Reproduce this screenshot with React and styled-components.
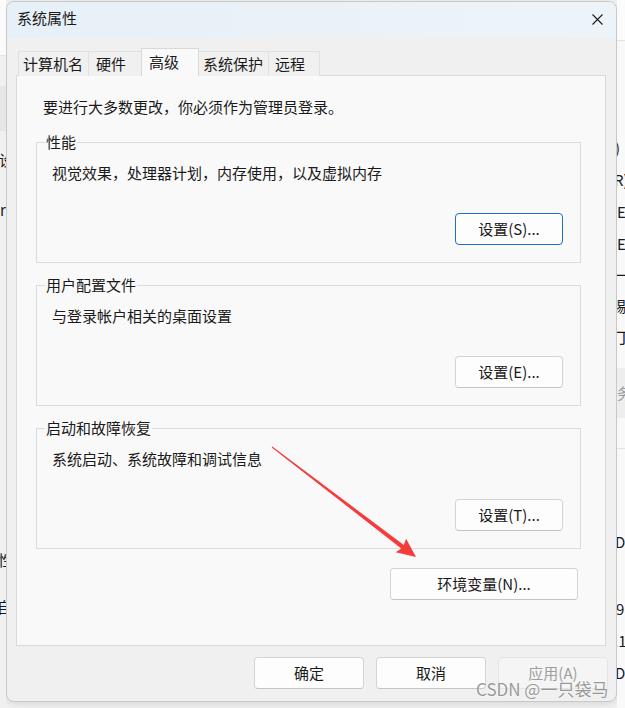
import React from 'react';
import styled, { createGlobalStyle } from 'styled-components';

const GlobalStyle = createGlobalStyle`
  html, body { margin: 0; padding: 0; }
  body {
    width: 625px;
    height: 708px;
    overflow: hidden;
    background: #f3f3f3;
    font-family: "Noto Sans CJK SC", "Noto Sans", sans-serif;
    color: #1a1a1a;
  }
`;

const Desktop = styled.div`
  position: relative;
  width: 625px;
  height: 708px;
  display: grid;
  grid-template-columns: 6px 611px 8px;
  overflow: hidden;
  background: #f3f3f3;
`;

const Strip = styled.div`
  position: relative;
  overflow: hidden;
  display: flex;
  flex-direction: column;
  background: ${p => (p.$side === 'left' ? '#f0f0f0' : '#f9f9f9')};
`;

const StripHead = styled.div`
  height: ${p => p.$h}px;
  flex: none;
  background: #fbfbfb;
  border-bottom: 1px solid #e3e3e3;
`;

const StripBlock = styled.div`
  height: ${p => p.$h}px;
  margin-top: ${p => p.$mt || 0}px;
  flex: none;
  background: ${p => p.$bg || 'transparent'};
  font-size: 15px;
  line-height: ${p => p.$h}px;
  white-space: nowrap;
  color: ${p => (p.$fade ? '#9a9a9a' : '#1a1a1a')};
  margin-left: ${p => p.$ml || 0}px;
`;

const Dialog = styled.div`
  grid-column: 2;
  margin-top: 1px;
  height: 701px;
  box-sizing: border-box;
  border: 1px solid #c8c8c8;
  border-radius: 8px;
  background: #f0f0f0;
  display: flex;
  flex-direction: column;
  overflow: hidden;
  box-shadow: 0 2px 10px rgba(0, 0, 0, 0.12);
`;

const TitleBar = styled.div`
  height: 36px;
  flex: none;
  display: flex;
  align-items: center;
  justify-content: space-between;
  padding: 0 13px 0 10px;
  background: linear-gradient(90deg, #e7f0f7 0%, #edf4f9 100%);
`;

const Title = styled.span`
  font-size: 15px;
  line-height: 20px;
  padding-bottom: 4px;
`;

const CloseIcon = () => (
  <svg width="11" height="11" viewBox="0 0 11 11" style={{ marginTop: -2 }}>
    <path d="M0.5 0.5 L10.5 10.5 M10.5 0.5 L0.5 10.5" stroke="#1c1c1c" strokeWidth="1.1" fill="none" />
  </svg>
);

const Body = styled.div`
  flex: 1;
  display: flex;
  flex-direction: column;
  padding: 10px 8px 0 9px;
`;

const TabRow = styled.div`
  display: flex;
  align-items: flex-end;
  padding-left: 3px;
  margin-bottom: -1px;
  position: relative;
  z-index: 1;
`;

const Tab = styled.div`
  box-sizing: border-box;
  width: ${p => p.$w}px;
  height: ${p => (p.$active ? 28 : 25)}px;
  margin-left: -1px;
  border: 1px solid ${p => (p.$active ? '#d9d9d9' : '#e0e0e0')};
  border-bottom: none;
  background: ${p => (p.$active ? '#f9f9f9' : '#f0f0f0')};
  display: flex;
  align-items: ${p => (p.$active ? 'flex-start' : 'center')};
  justify-content: flex-start;
  padding-left: ${p => p.$pl}px;
  padding-top: ${p => (p.$active ? 3 : 0)}px;
  font-size: 15px;
  line-height: 20px;
  position: relative;
  z-index: ${p => (p.$active ? 2 : 1)};
`;

const Panel = styled.div`
  box-sizing: border-box;
  width: 590px;
  height: 571px;
  flex: none;
  border: 1px solid #dadada;
  background: #f9f9f9;
  padding: 21px 24px 0 19px;
  display: flex;
  flex-direction: column;
`;

const Note = styled.div`
  margin-left: 7px;
  font-size: 15px;
  line-height: 20px;
`;

const Groups = styled.div`
  margin-top: 25px;
  display: flex;
  flex-direction: column;
  gap: 22px;
`;

const Group = styled.div`
  position: relative;
  box-sizing: border-box;
  height: 121px;
  border: 1px solid #dcdcdc;
  padding: 20px 17px 17px 15px;
  display: flex;
  flex-direction: column;
  justify-content: space-between;
`;

const Legend = styled.span`
  position: absolute;
  top: -11px;
  left: 8px;
  padding: 0 1px;
  background: #f9f9f9;
  font-size: 15px;
  line-height: 20px;
`;

const Desc = styled.div`
  font-size: 15px;
  line-height: 20px;
`;

const Button = styled.button`
  box-sizing: border-box;
  width: ${p => p.$w}px;
  height: 32px;
  flex: none;
  padding: 0;
  margin: 0;
  border-radius: 4px;
  border: 1px solid ${p => (p.$focus ? '#1f6fc4' : p.$disabled ? '#e4e4e4' : '#d4d4d4')};
  border-bottom-color: ${p => (p.$focus ? '#1f6fc4' : p.$disabled ? '#e4e4e4' : '#c4c4c4')};
  background: ${p => (p.$disabled ? '#f5f5f5' : '#fdfdfd')};
  color: ${p => (p.$disabled ? '#9e9e9e' : '#1a1a1a')};
  font-family: "Noto Sans CJK SC", "Noto Sans", sans-serif;
  font-size: 15px;
  line-height: 20px;
  display: flex;
  align-items: center;
  justify-content: center;
  align-self: ${p => p.$self || 'auto'};
  margin-right: ${p => p.$mr || 0}px;
`;

const EnvRow = styled.div`
  margin-top: 19px;
  display: flex;
  justify-content: flex-end;
`;

const Footer = styled.div`
  margin-top: 11px;
  display: flex;
  justify-content: flex-end;
  gap: 12px;
`;

const Overlay = styled.svg`
  position: absolute;
  left: 0;
  top: 0;
  pointer-events: none;
`;

const Watermark = styled.div`
  position: absolute;
  left: 476px;
  top: 677px;
  font-family: "Noto Sans CJK SC", "Noto Sans", sans-serif;
  font-size: 17px;
  line-height: 24px;
  color: rgba(125, 125, 125, 0.78);
  text-shadow: 0 0 2px rgba(255, 255, 255, 0.9);
  white-space: nowrap;
`;

const tabs = [
  { label: '计算机名', w: 71, pl: 4 },
  { label: '硬件', w: 54, pl: 7 },
  { label: '高级', w: 58, pl: 7, active: true },
  { label: '系统保护', w: 71, pl: 4 },
  { label: '远程', w: 52, pl: 6 },
];

const groups = [
  { title: '性能', desc: '视觉效果，处理器计划，内存使用，以及虚拟内存', btn: '设置(S)...', focus: true },
  { title: '用户配置文件', desc: '与登录帐户相关的桌面设置', btn: '设置(E)...' },
  { title: '启动和故障恢复', desc: '系统启动、系统故障和调试信息', btn: '设置(T)...' },
];

// arrow geometry
const tip = [416, 557];
const start = [272, 447];
const dx = tip[0] - start[0];
const dy = tip[1] - start[1];
const len = Math.hypot(dx, dy);
const ux = dx / len;
const uy = dy / len;
const px = -uy;
const py = ux;
const headLen = 19;
const headHalf = 8.5;
const bc = [tip[0] - ux * headLen, tip[1] - uy * headLen];
const shaftHalf = 2.2;
const pts = [
  [start[0] + px * 0.5, start[1] + py * 0.5],
  [bc[0] + px * shaftHalf + ux * 2, bc[1] + py * shaftHalf + uy * 2],
  [bc[0] + px * headHalf, bc[1] + py * headHalf],
  tip,
  [bc[0] - px * headHalf, bc[1] - py * headHalf],
  [bc[0] - px * shaftHalf + ux * 2, bc[1] - py * shaftHalf + uy * 2],
  [start[0] - px * 0.5, start[1] - py * 0.5],
]
  .map(p => p.map(v => v.toFixed(1)).join(','))
  .join(' ');

export default function App() {
  return (
    <>
      <GlobalStyle />
      <Desktop>
        <Strip $side="left">
          <StripHead $h={55} />
          <StripBlock $h={45} $mt={30} $bg="#e6e6e6" />
          <StripBlock $h={22} $mt={18} $ml={-1}>设</StripBlock>
          <StripBlock $h={22} $mt={28} $ml={0}>r</StripBlock>
          <StripBlock $h={22} $mt={328} $ml={-2}>性</StripBlock>
          <StripBlock $h={22} $mt={25} $ml={-3}>自</StripBlock>
        </Strip>

        <Dialog>
          <TitleBar>
            <Title>系统属性</Title>
            <CloseIcon />
          </TitleBar>
          <Body>
            <TabRow>
              {tabs.map(t => (
                <Tab key={t.label} $w={t.w} $pl={t.pl} $active={t.active}>
                  {t.label}
                </Tab>
              ))}
            </TabRow>
            <Panel>
              <Note>要进行大多数更改，你必须作为管理员登录。</Note>
              <Groups>
                {groups.map(g => (
                  <Group key={g.title}>
                    <Legend>{g.title}</Legend>
                    <Desc>{g.desc}</Desc>
                    <Button $w={108} $self="flex-end" $focus={g.focus}>
                      {g.btn}
                    </Button>
                  </Group>
                ))}
              </Groups>
              <EnvRow>
                <Button $w={188} $mr={3}>环境变量(N)...</Button>
              </EnvRow>
            </Panel>
            <Footer>
              <Button $w={110}>确定</Button>
              <Button $w={110}>取消</Button>
              <Button $w={110} $disabled>应用(A)</Button>
            </Footer>
          </Body>
        </Dialog>

        <Strip $side="right">
          <StripHead $h={40} />
          <StripBlock $h={22} $mt={96} $ml={-2}>)</StripBlock>
          <StripBlock $h={22} $mt={10} $ml={-3}>R)</StripBlock>
          <StripBlock $h={22} $mt={10} $ml={0}>E</StripBlock>
          <StripBlock $h={22} $mt={10} $ml={0}>E</StripBlock>
          <StripBlock $h={22} $mt={9} $ml={-2}>一</StripBlock>
          <StripBlock $h={22} $mt={9} $ml={-6}>赐</StripBlock>
          <StripBlock $h={22} $mt={9} $ml={-1}>丁</StripBlock>
          <StripBlock $h={50} $mt={20} $bg="#eeeeee" $fade $ml={0}>务</StripBlock>
          <StripBlock $h={1} $mt={30} $bg="#e3e3e3" />
          <StripBlock $h={22} $mt={82} $ml={-2}>D'</StripBlock>
          <StripBlock $h={22} $mt={45} $ml={-1}>9</StripBlock>
          <StripBlock $h={22} $mt={10} $ml={-3}>.1</StripBlock>
          <StripBlock $h={22} $mt={10} $ml={-2}>D'</StripBlock>
        </Strip>

        <Overlay width="625" height="708" viewBox="0 0 625 708">
          <polygon points={pts} fill="#f53c3c" />
        </Overlay>
        <Watermark>CSDN @一只袋马</Watermark>
      </Desktop>
    </>
  );
}
